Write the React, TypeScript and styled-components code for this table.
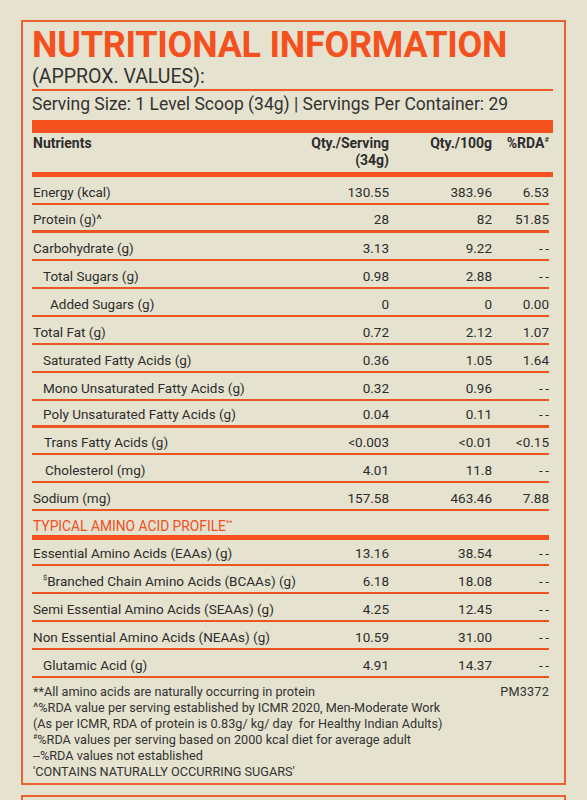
import React from 'react';
import styled, { createGlobalStyle } from 'styled-components';

const GlobalStyle = createGlobalStyle`
  body {
    margin: 0;
    background: #e5e2d0;
    font-family: Roboto, "Liberation Sans", sans-serif;
    color: #2d2d2b;
  }
`;

const Page = styled.div`
  padding: 20px 21px 0 21px;
  display: flex;
  flex-direction: column;
  gap: 10px;
`;

const Panel = styled.div`
  border: 2px solid #ea6234;
  padding: 5px 11px 3px 9px;
`;

const NextPanel = styled.div`
  border: 2px solid #ea6234;
  height: 80px;
`;

const Title = styled.h1`
  margin: 0;
  font-size: 36px;
  line-height: 36px;
  font-weight: 700;
  letter-spacing: -0.25px;
  color: #f4511e;
`;

const Subtitle = styled.div`
  margin-top: 4px;
  font-size: 19.5px;
  line-height: 20px;
  color: #333330;
`;

const Rule = styled.div`
  margin-top: 2px;
  height: 2px;
  background: #f0582a;
`;

const Serving = styled.div`
  margin-top: 3px;
  font-size: 17.5px;
  line-height: 20px;
  color: #333330;
`;

const Bar = styled.div`
  margin-top: 6px;
  height: 13px;
  background: #f4511e;
`;

const Grid = styled.div`
  display: grid;
  grid-template-columns: 1fr 90px 103px 57px;
`;

const HeadRow = styled(Grid)`
  height: 44px;
  box-sizing: border-box;
  padding: 2px 4px 0 1px;
  border-bottom: 5px solid #f4511e;
  font-size: 14px;
  line-height: 17px;
  font-weight: 700;
  color: #2d2d2b;
`;

const HeadCell = styled.div<{ $right?: boolean }>`
  text-align: ${(p) => (p.$right ? 'right' : 'left')};
`;

const Row = styled(Grid)<{ $line: number; $h: number }>`
  height: ${(p) => p.$h}px;
  box-sizing: border-box;
  margin-right: 4px;
  padding: 0 0 3px 1px;
  align-items: end;
  border-bottom: ${(p) => p.$line}px solid #f05322;
  font-size: 13.5px;
  line-height: 16px;
`;

const Label = styled.div<{ $indent: number }>`
  padding-left: ${(p) => p.$indent}px;
  white-space: nowrap;
`;

const Num = styled.div`
  text-align: right;
`;

const Dash = styled.span`
  letter-spacing: 2.5px;
  margin-right: -2.5px;
`;

const Section = styled.div`
  height: 29px;
  box-sizing: border-box;
  margin-right: 4px;
  padding: 7px 0 0 1px;
  border-bottom: 5px solid #f4511e;
  font-size: 13.8px;
  line-height: 16px;
  color: #f0501c;
`;

const Sup = styled.sup`
  font-size: 0.55em;
  line-height: 0;
  vertical-align: 0.75em;
`;

const Notes = styled.div`
  margin-top: 6px;
  display: flex;
  justify-content: space-between;
  padding: 0 4px 0 1px;
  font-size: 12.7px;
  line-height: 16px;
  color: #333330;
`;

const NoteList = styled.div`
  display: flex;
  flex-direction: column;
`;

const Code = styled.div`
  letter-spacing: 0.2px;
`;

type Item = {
  label: React.ReactNode;
  serving: string;
  per100: string;
  rda: string;
  indent?: number;
  line?: number;
  h?: number;
};

const nutrients: Item[] = [
  { label: 'Energy (kcal)', serving: '130.55', per100: '383.96', rda: '6.53' },
  { label: 'Protein (g)^', serving: '28', per100: '82', rda: '51.85', line: 3 },
  { label: 'Carbohydrate (g)', serving: '3.13', per100: '9.22', rda: '--' },
  { label: 'Total Sugars (g)', serving: '0.98', per100: '2.88', rda: '--', indent: 10 },
  { label: 'Added Sugars (g)', serving: '0', per100: '0', rda: '0.00', indent: 17 },
  { label: 'Total Fat (g)', serving: '0.72', per100: '2.12', rda: '1.07' },
  { label: 'Saturated Fatty Acids (g)', serving: '0.36', per100: '1.05', rda: '1.64', indent: 10 },
  { label: 'Mono Unsaturated Fatty Acids (g)', serving: '0.32', per100: '0.96', rda: '--', indent: 10 },
  { label: 'Poly Unsaturated Fatty Acids (g)', serving: '0.04', per100: '0.11', rda: '--', indent: 10, line: 3, h: 27 },
  { label: 'Trans Fatty Acids (g)', serving: '<0.003', per100: '<0.01', rda: '<0.15', indent: 11, h: 27 },
  { label: 'Cholesterol (mg)', serving: '4.01', per100: '11.8', rda: '--', indent: 12 },
  { label: 'Sodium (mg)', serving: '157.58', per100: '463.46', rda: '7.88' },
];

const aminos: Item[] = [
  { label: 'Essential Amino Acids (EAAs) (g)', serving: '13.16', per100: '38.54', rda: '--', h: 26 },
  {
    label: (
      <>
        <Sup>$</Sup>Branched Chain Amino Acids (BCAAs) (g)
      </>
    ),
    serving: '6.18',
    per100: '18.08',
    rda: '--',
    indent: 10,
  },
  { label: 'Semi Essential Amino Acids (SEAAs) (g)', serving: '4.25', per100: '12.45', rda: '--' },
  { label: 'Non Essential Amino Acids (NEAAs) (g)', serving: '10.59', per100: '31.00', rda: '--' },
  { label: 'Glutamic Acid (g)', serving: '4.91', per100: '14.37', rda: '--', indent: 10 },
];

const NutrientRow = ({ item }: { item: Item }) => (
  <Row $line={item.line ?? 2} $h={item.h ?? 28}>
    <Label $indent={item.indent ?? 0}>{item.label}</Label>
    <Num>{item.serving}</Num>
    <Num>{item.per100}</Num>
    <Num>{item.rda === '--' ? <Dash>--</Dash> : item.rda}</Num>
  </Row>
);

export default function App() {
  return (
    <>
      <GlobalStyle />
      <Page>
        <Panel>
          <Title>NUTRITIONAL INFORMATION</Title>
          <Subtitle>(APPROX. VALUES):</Subtitle>
          <Rule />
          <Serving>Serving Size: 1 Level Scoop (34g) | Servings Per Container: 29</Serving>
          <Bar />
          <HeadRow>
            <HeadCell>Nutrients</HeadCell>
            <HeadCell $right>
              Qty./Serving
              <br />
              (34g)
            </HeadCell>
            <HeadCell $right>Qty./100g</HeadCell>
            <HeadCell $right>
              %RDA<Sup>#</Sup>
            </HeadCell>
          </HeadRow>
          {nutrients.map((n, i) => (
            <NutrientRow key={i} item={n} />
          ))}
          <Section>
            TYPICAL AMINO ACID PROFILE<Sup>**</Sup>
          </Section>
          {aminos.map((n, i) => (
            <NutrientRow key={i} item={n} />
          ))}
          <Notes>
            <NoteList>
              <div>**All amino acids are naturally occurring in protein</div>
              <div>^%RDA value per serving established by ICMR 2020, Men-Moderate Work</div>
              <div>(As per ICMR, RDA of protein is 0.83g/ kg/ day&nbsp; for Healthy Indian Adults)</div>
              <div>
                <Sup>#</Sup>%RDA values per serving based on 2000 kcal diet for average adult
              </div>
              <div>--%RDA values not established</div>
              <div>'CONTAINS NATURALLY OCCURRING SUGARS'</div>
            </NoteList>
            <Code>PM3372</Code>
          </Notes>
        </Panel>
        <NextPanel />
      </Page>
    </>
  );
}
